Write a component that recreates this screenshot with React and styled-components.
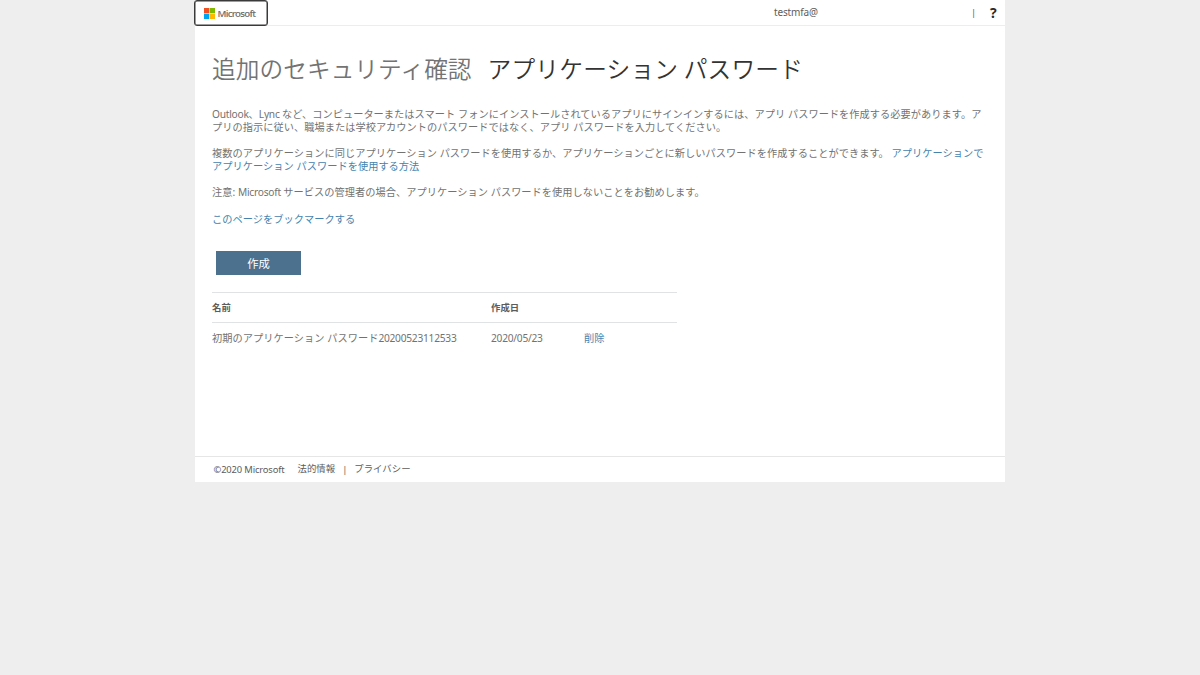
import React from "react";
import styled, { createGlobalStyle } from "styled-components";

const passwords = [
  {
    id: 1,
    name: "初期のアプリケーション パスワード",
    stamp: "20200523112533",
    created: "2020/05/23",
  },
];

const MicrosoftLogo = () => (
  <svg width="11" height="11" viewBox="0 0 23 23">
    <path fill="#f25022" d="M0 0h11v11H0z" />
    <path fill="#7fba00" d="M12 0h11v11H12z" />
    <path fill="#00a4ef" d="M0 12h11v11H0z" />
    <path fill="#ffb900" d="M12 12h11v11H12z" />
  </svg>
);

export default function App() {
  return (
    <>
      <GlobalStyle />
      <Page>
        <Header>
          <LogoLink href="#">
            <MicrosoftLogo />
            <LogoText>Microsoft</LogoText>
          </LogoLink>
          <UserName>testmfa@</UserName>
          <Divider>|</Divider>
          <Help>?</Help>
        </Header>

        <Content>
          <Title>
            追加のセキュリティ確認
            <SubTitle>アプリケーション パスワード</SubTitle>
          </Title>

          <Paragraph>
            <Latin>Outlook</Latin>、<Latin>Lync </Latin>
            など、コンピューターまたはスマート フォンにインストールされているアプリにサインインするには、アプリ
            パスワードを作成する必要があります。ア
            <br />
            プリの指示に従い、職場または学校アカウントのパスワードではなく、アプリ
            パスワードを入力してください。
          </Paragraph>
          <Paragraph>
            複数のアプリケーションに同じアプリケーション
            パスワードを使用するか、アプリケーションごとに新しいパスワードを作成することができます。{" "}
            <Link href="#">
              アプリケーションで
              <br />
              アプリケーション パスワードを使用する方法
            </Link>
          </Paragraph>
          <Paragraph>
            注意: <Latin>Microsoft </Latin>
            サービスの管理者の場合、アプリケーション
            パスワードを使用しないことをお勧めします。
          </Paragraph>
          <Paragraph>
            <Link href="#">このページをブックマークする</Link>
          </Paragraph>

          <CreateButton>作成</CreateButton>

          <Table>
            <HeadRow>
              <span>名前</span>
              <span>作成日</span>
            </HeadRow>
            {passwords.map((item) => (
              <Row key={item.id}>
                <span>
                  {item.name}
                  <Latin>{item.stamp}</Latin>
                </span>
                <Latin>{item.created}</Latin>
                <Link href="#">削除</Link>
              </Row>
            ))}
          </Table>
        </Content>

        <Footer>
          <Copyright>©2020 Microsoft</Copyright>
          <FooterLink href="#">法的情報</FooterLink>
          <FooterDivider>|</FooterDivider>
          <FooterLink href="#">プライバシー</FooterLink>
        </Footer>
      </Page>
    </>
  );
}

const GlobalStyle = createGlobalStyle`
  * {
    box-sizing: border-box;
  }
  body {
    margin: 0;
    background: #eee;
    color: #727272;
    font-family: "Noto Sans", "Noto Sans CJK JP", sans-serif;
    font-size: 10.2px;
    line-height: 13px;
    letter-spacing: 0.055px;
  }
  a {
    text-decoration: none;
  }
`;

const Page = styled.div`
  display: flex;
  flex-direction: column;
  width: 810px;
  height: 482px;
  margin: 0 auto;
  background: #fff;
`;

const Header = styled.header`
  display: flex;
  align-items: center;
  height: 26px;
  flex: none;
  border-bottom: 1px solid #ededed;
`;

const LogoLink = styled.a`
  display: flex;
  align-items: center;
  gap: 3px;
  width: 74px;
  height: 26px;
  margin: 0 -1px -1px -1px;
  padding: 1px 0 0 8.5px;
  border: 1px solid #3a3a3a;
  border-radius: 3px;
  box-shadow: inset 0 0 0 0.5px #3a3a3a;
  flex: none;
`;

const LogoText = styled.span`
  color: #6e6e6e;
  font-family: "Open Sans", sans-serif;
  font-size: 9.7px;
  font-weight: 600;
  letter-spacing: -0.75px;
`;

const UserName = styled.span`
  width: 197px;
  margin-left: 507px;
  font-size: 10px;
  letter-spacing: -0.15px;
  color: #5c5c5c;
`;

const Divider = styled.span`
  width: 5px;
  color: #5c5c5c;
  font-size: 9.4px;
  text-align: center;
`;

const Help = styled.span`
  margin-left: 14px;
  color: #2a2a2a;
  font-size: 14px;
  font-weight: 700;
`;

const Content = styled.main`
  flex: 1;
  padding: 26px 17px 0;
`;

const Title = styled.h1`
  margin: 0 0 24px;
  color: #737373;
  font-family: "Noto Sans CJK JP", sans-serif;
  font-size: 23.7px;
  font-weight: 350;
  letter-spacing: 0.04px;
  line-height: 32px;
  white-space: nowrap;
`;

const SubTitle = styled.span`
  margin-left: 16px;
  color: #333;
  letter-spacing: 0.2px;
`;

const Paragraph = styled.p`
  margin: 0 0 13.2px;
  white-space: nowrap;
`;

const Latin = styled.span`
  letter-spacing: -0.25px;
  white-space: pre;
`;

const Link = styled.a`
  color: #4583ae;
`;

const CreateButton = styled.button`
  display: block;
  width: 85px;
  height: 24px;
  margin: 25.2px 0 17px 4px;
  padding: 1px 0 0;
  border: none;
  background: #4c718f;
  color: #fff;
  font-family: inherit;
  font-size: 11.3px;
  line-height: 23px;
`;

const Table = styled.div`
  width: 465px;
  border-top: 1px solid #dfe3e3;
`;

const Row = styled.div`
  display: grid;
  grid-template-columns: 279px 93px 1fr;
  align-items: center;
  height: 31px;
`;

const HeadRow = styled(Row)`
  height: 30px;
  border-bottom: 1px solid #dfe3e3;
  color: #5c5c5c;
  font-size: 9.4px;
  font-weight: 700;
`;

const Footer = styled.footer`
  display: flex;
  align-items: center;
  height: 26px;
  padding-left: 18.5px;
  border-top: 1px solid #e6e6e6;
  color: #5c5c5c;
  font-size: 9.4px;
`;

const Copyright = styled.span`
  width: 84px;
  letter-spacing: -0.15px;
`;

const FooterLink = styled.a`
  padding-bottom: 2px;
  color: #5c5c5c;
`;

const FooterDivider = styled(Divider)`
  margin: 0 7px;
`;
